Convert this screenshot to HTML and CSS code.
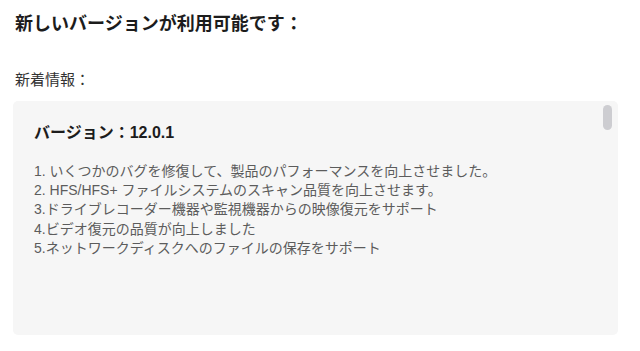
FILE: index.html
```html
<!DOCTYPE html>
<html lang="ja">
<head>
<meta charset="utf-8">
<link rel="stylesheet" href="styles.css">
</head>
<body>
<div class="page">
  <h1 class="title">新しいバージョンが利用可能です：</h1>
  <div class="label">新着情報：</div>
  <div class="notes">
    <div class="notes-body">
      <h2 class="version">バージョン：12.0.1</h2>
      <div class="list">
        <div class="item">1. いくつかのバグを修復して、製品のパフォーマンスを向上させました。</div>
        <div class="item">2. HFS/HFS+ ファイルシステムのスキャン品質を向上させます。</div>
        <div class="item">3.ドライブレコーダー機器や監視機器からの映像復元をサポート</div>
        <div class="item">4.ビデオ復元の品質が向上しました</div>
        <div class="item">5.ネットワークディスクへのファイルの保存をサポート</div>
      </div>
    </div>
    <div class="scrollbar"><div class="thumb"></div></div>
  </div>
</div>
</body>
</html>
```
FILE: styles.css
```css
html, body {
  margin: 0;
  padding: 0;
  background: #ffffff;
}
body {
  font-family: "Liberation Sans", "Noto Sans CJK JP", sans-serif;
  color: #222;
}
.page {
  width: 640px;
  height: 351px;
  box-sizing: border-box;
  padding: 12px 22px 16px 13px;
  display: flex;
  flex-direction: column;
}
.title {
  margin: 0 0 0 2px;
  font-size: 18px;
  line-height: 24px;
  font-weight: 700;
  color: #1c1c1c;
}
.label {
  margin: 33px 0 0 2px;
  font-size: 15px;
  line-height: 22px;
  color: #333;
}
.notes {
  margin-top: 10px;
  flex: 1;
  background: #f6f6f6;
  border-radius: 5px;
  display: flex;
}
.notes-body {
  flex: 1;
  padding: 20px 0 0 21px;
}
.version {
  margin: 0;
  font-size: 16px;
  line-height: 24px;
  font-weight: 700;
  color: #1c1c1c;
}
.list {
  margin-top: 17px;
  font-size: 14px;
  line-height: 19.2px;
  color: #5c5c5c;
}
.scrollbar {
  width: 21px;
  padding-top: 4px;
  display: flex;
  justify-content: center;
}
.thumb {
  width: 9px;
  height: 25px;
  border-radius: 4.5px;
  background: #cdcdd1;
}
```
